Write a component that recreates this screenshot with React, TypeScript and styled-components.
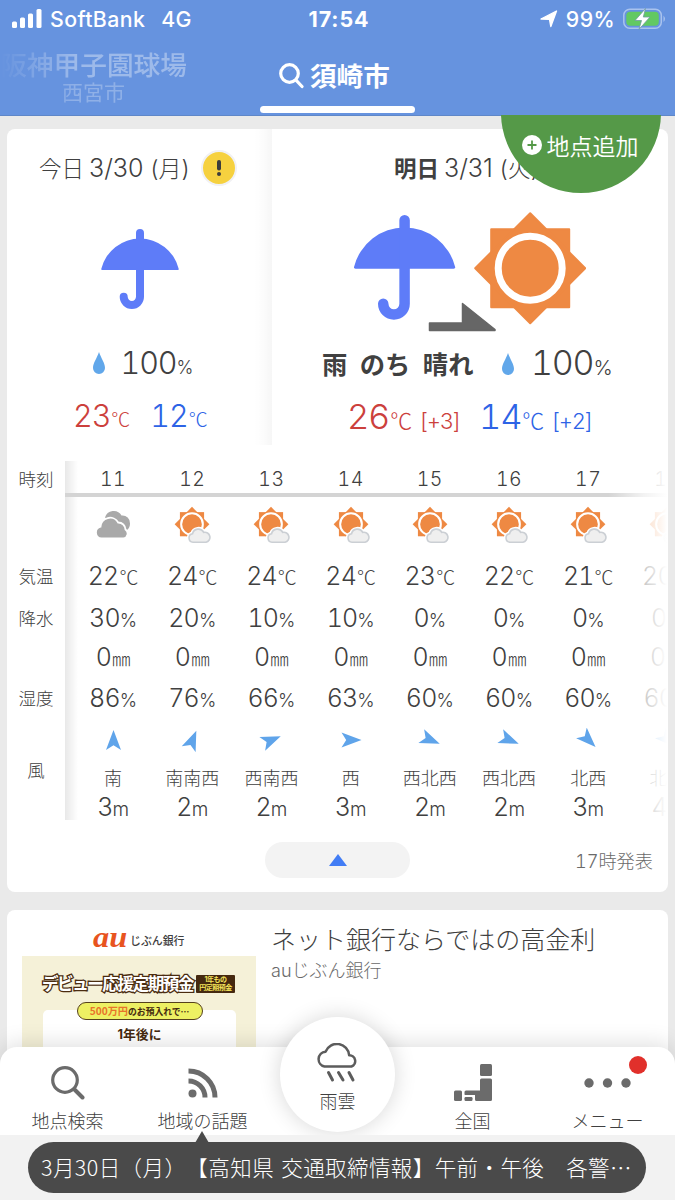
import React from 'react';
import styled, { createGlobalStyle, css } from 'styled-components';

const GlobalStyle = createGlobalStyle`
  * { box-sizing: border-box; }
  body {
    margin: 0;
    background: #eaeaea;
    color: #404040;
    font-family: Inter, "Noto Sans CJK JP", sans-serif;
    font-weight: 300;
    text-spacing-trim: space-all;
    white-space: nowrap;
  }
  svg { display: block; flex: none; }
`;

const Screen = styled.div`
  position: relative;
  width: 675px;
  height: 1200px;
  overflow: hidden;
  background: #eaeaea;
`;

/* ---------- header ---------- */

const Header = styled.header`
  height: 116px;
  background: #6693df;
  border-bottom: 1px solid #5f87c8;
  color: #fff;
`;

const StatusBar = styled.div`
  display: grid;
  grid-template-columns: 1fr auto 1fr;
  align-items: center;
  height: 37px;
  padding: 0 9px 0 12px;
  font-size: 21.3px;
  font-weight: 500;
  letter-spacing: 0.4px;
`;

const StatusGroup = styled.div<{ $end?: boolean }>`
  display: flex;
  align-items: center;
  gap: 8px;
  justify-content: ${(p) => (p.$end ? 'flex-end' : 'flex-start')};
`;

const Network = styled.span`
  margin-left: 8px;
`;

const Clock = styled.span`
  font-size: 21.5px;
  font-weight: 700;
  letter-spacing: 0.9px;
`;

const Tabs = styled.nav`
  display: grid;
  grid-template-columns: 260px 155px 260px;
  height: 78px;
`;

const SideTab = styled.div`
  display: flex;
  flex-direction: column;
  align-items: center;
  width: 187px;
  padding-top: 12px;
  color: rgba(255, 255, 255, 0.36);
  mask-image: linear-gradient(90deg, transparent 0, #000 75px);
`;

const SideTabName = styled.div`
  align-self: flex-end;
  font-size: 26.7px;
  line-height: 32px;
  font-weight: 500;
`;

const SideTabCity = styled.div`
  font-size: 21px;
  line-height: 24px;
  font-weight: 400;
  opacity: 0.75;
`;

const ActiveTab = styled.div`
  display: flex;
  flex-direction: column;
  justify-content: space-between;
  padding-bottom: 2px;
`;

const ActiveName = styled.div`
  display: flex;
  align-items: center;
  gap: 6px;
  height: 62px;
  padding: 15px 0 0 19px;
  font-size: 26.6px;
  line-height: 48px;
  font-weight: 700;
`;

const ActiveBar = styled.div`
  height: 7px;
  border-radius: 4px;
  background: #fff;
`;

const AddClip = styled.div`
  position: absolute;
  left: 501px;
  top: 115px;
  width: 160px;
  height: 78px;
  overflow: hidden;
`;

const AddPlace = styled.button`
  display: flex;
  align-items: center;
  justify-content: center;
  gap: 5px;
  width: 160px;
  height: 160px;
  margin-top: -82px;
  padding: 63px 2px 0 0;
  border: 0;
  border-radius: 50%;
  background: #559948;
  color: #fff;
  font-family: inherit;
  font-size: 23px;
  font-weight: 350;
`;

/* ---------- weather card ---------- */

const Main = styled.main`
  display: flex;
  flex-direction: column;
  gap: 18px;
  padding: 13px 7px 0;
`;

const Card = styled.section`
  width: 661px;
  border-radius: 8px;
  background: #fff;
`;

const Days = styled.div`
  display: grid;
  grid-template-columns: 265px 1fr;
  height: 316px;
`;

const Day = styled.div<{ $shade?: boolean }>`
  display: flex;
  flex-direction: column;
  ${(p) =>
    p.$shade &&
    css`
      border-radius: 8px 0 0 0;
      background: linear-gradient(90deg, rgba(0, 0, 0, 0) 247px, rgba(0, 0, 0, 0.01) 256px, rgba(0, 0, 0, 0.035) 265px);
    `}
`;

const DayTitle = styled.div<{ $left: number }>`
  display: flex;
  align-items: center;
  height: 77px;
  padding-left: ${(p) => p.$left}px;
  font-size: 25px;
`;

const DayWord = styled.span<{ $bold?: boolean }>`
  margin: -2px 5px 0 0;
  font-size: 22.5px;
  font-weight: ${(p) => (p.$bold ? 700 : 300)};
`;

const DayWeek = styled.span`
  margin: -2px 0 0 7px;
  font-size: 23px;
`;

const Alert = styled.span`
  display: grid;
  place-items: center;
  width: 36px;
  height: 36px;
  margin-left: 12px;
  border: 2px solid #f1f1f4;
  border-radius: 50%;
  background: #f6d13f;
`;

const DayIcons = styled.div<{ $left: number; $top: number }>`
  display: flex;
  align-items: flex-start;
  height: 128px;
  padding: ${(p) => p.$top}px 0 0 ${(p) => p.$left}px;
`;

const DayLine = styled.div<{ $left: number; $height: number }>`
  display: flex;
  align-items: center;
  height: ${(p) => p.$height}px;
  padding-left: ${(p) => p.$left}px;
`;

const Telop = styled.span`
  width: 180px;
  margin-top: -2px;
  font-size: 25.3px;
  font-weight: 700;
  word-spacing: 6.5px;
`;

const Figure = styled.span<{ $size: number; $tone?: string; $gap?: number }>`
  display: inline-flex;
  align-items: baseline;
  margin-left: ${(p) => p.$gap ?? 0}px;
  font-size: ${(p) => p.$size}px;
  line-height: 1.2;
  letter-spacing: -0.035em;
  font-feature-settings: 'tnum';
  color: ${(p) => p.$tone ?? 'inherit'};
`;

const Unit = styled.span<{ $size: number }>`
  font-size: ${(p) => p.$size}px;
  line-height: 1;
  letter-spacing: 0;
`;

const Celsius = styled(Unit)`
  margin-left: 1px;
  font-family: 'Noto Sans CJK JP', sans-serif;
`;

const Delta = styled.span`
  margin-left: 7px;
  font-size: 22px;
`;

/* ---------- hourly table ---------- */

const Hourly = styled.div`
  display: grid;
  grid-template-columns: 58px 1fr;
  height: 359px;
  margin-top: 16px;
`;

const rows = css`
  display: grid;
  grid-template-rows: 36px 56px 45px 39px 40px 42px 42px 32px 27px;
  justify-items: center;
  align-items: center;
`;

const Labels = styled.div`
  ${rows}
  font-size: 17.5px;
`;

const Label = styled.div<{ $row: string }>`
  grid-row: ${(p) => p.$row};
  margin-top: -1px;
`;

const Scroller = styled.div`
  position: relative;
  display: flex;
  padding-left: 8.5px;
  overflow: hidden;
  background: linear-gradient(90deg, rgba(0, 0, 0, 0.09), rgba(0, 0, 0, 0) 13px);

  &::after {
    content: '';
    position: absolute;
    inset: 0 0 0 auto;
    width: 68px;
    background: linear-gradient(90deg, rgba(255, 255, 255, 0) 8px, rgba(255, 255, 255, 0.72) 44px, #fff 67px);
  }
`;

const HourColumn = styled.div`
  ${rows}
  flex: none;
  width: 79.2px;
`;

const Hour = styled.div`
  align-self: stretch;
  justify-self: stretch;
  border-bottom: 4px solid #d4d4d4;
  font-size: 19.5px;
  line-height: 36px;
  text-align: center;
  letter-spacing: 0.5px;
  font-feature-settings: 'tnum';
`;

const FirstRule = styled.div`
  flex: none;
  width: 8.5px;
  height: 36px;
  margin-left: -8.5px;
  border-bottom: 4px solid #d4d4d4;
`;

const Direction = styled.div`
  font-size: 18px;
`;

const CardFoot = styled.div`
  display: grid;
  grid-template-columns: 1fr 145px 1fr;
  align-items: center;
  height: 72px;
  padding: 8px 15px 0 15px;
`;

const Collapse = styled.button`
  display: grid;
  place-items: center;
  height: 36px;
  padding: 0;
  border: 0;
  border-radius: 18px;
  background: #f3f3f3;
`;

const Issued = styled.div`
  text-align: right;
  font-size: 18.2px;
  font-feature-settings: 'tnum';
  color: #6a6a6a;
`;

/* ---------- sponsored card ---------- */

const AdCard = styled(Card)`
  display: grid;
  grid-template-columns: 249px 1fr;
  column-gap: 15px;
  height: 300px;
`;

const Banner = styled.div`
  width: 234px;
  margin-left: 15px;
`;

const BankLogo = styled.div`
  display: flex;
  align-items: center;
  gap: 3px;
  height: 46px;
  padding: 14px 0 0 71px;
  font-size: 10.9px;
  font-weight: 500;
`;

const AuMark = styled.span`
  width: 34px;
  font: italic 700 30px/20px 'Liberation Serif', serif;
  color: #e8541f;
  transform: translateY(-3px) scaleX(1.08);
  transform-origin: left;
`;

const BannerArt = styled.div`
  height: 254px;
  padding-top: 16px;
  background: #f5f1d8;
`;

const BannerHead = styled.div`
  display: flex;
  align-items: center;
  gap: 3px;
  padding-left: 20px;
`;

const BannerTitle = styled.span`
  width: 151px;
  font-size: 16.6px;
  line-height: 24px;
  font-weight: 700;
  letter-spacing: -1.5px;
  color: #fff;
  paint-order: stroke fill;
  -webkit-text-stroke: 2.6px #4a2c10;
`;

const BannerTag = styled.span`
  width: 39px;
  height: 18px;
  padding-top: 1px;
  border-radius: 1px;
  background: #45290f;
  color: #f3e35a;
  font-size: 7px;
  line-height: 8px;
  font-weight: 700;
  text-align: center;
  letter-spacing: -0.5px;
`;

const BannerPanel = styled.div`
  display: flex;
  flex-direction: column;
  align-items: center;
  width: 193px;
  height: 200px;
  margin: 14px 0 0 21px;
  border-radius: 5px;
  background: #fff;
`;

const BannerPill = styled.div`
  width: 126px;
  height: 18px;
  margin-top: -8px;
  border: 1px solid #55401c;
  border-radius: 9px;
  background: #edf063;
  color: #45290f;
  font-family: 'Noto Sans CJK JP', sans-serif;
  font-size: 8.8px;
  line-height: 16px;
  font-weight: 700;
  text-align: center;

  b {
    font-size: 10.2px;
    font-weight: 700;
    color: #e8742a;
  }
`;

const BannerTerm = styled.div`
  margin-top: 7px;
  color: #45290f;
  font-size: 12.8px;
  line-height: 16px;
  font-weight: 700;
`;

const BannerRate = styled.div`
  margin-top: 2px;
  color: #45290f;
  font-size: 32px;
  line-height: 32px;
  font-weight: 800;
`;

const AdText = styled.div`
  padding-top: 14px;
`;

const AdTitle = styled.div`
  font-size: 25px;
  line-height: 32px;
`;

const AdSponsor = styled.div`
  padding-top: 2px;
  font-size: 18px;
  line-height: 26px;
  color: #6a6a6a;
`;

/* ---------- bottom navigation ---------- */

const Dock = styled.footer`
  position: absolute;
  left: 0;
  right: 0;
  bottom: 0;
  height: 153px;
`;

const NavBar = styled.nav`
  position: relative;
  display: grid;
  grid-template-columns: repeat(5, 135px);
  height: 88px;
  border-radius: 17px 17px 0 0;
  background: #fff;
  box-shadow: 0 -3px 22px rgba(0, 0, 0, 0.13);
`;

const NavItem = styled.div`
  display: flex;
  flex-direction: column;
  align-items: center;
  font-size: 18px;
  line-height: 26px;
`;

const NavIcon = styled.div`
  position: relative;
  display: grid;
  place-items: center;
  width: 70px;
  height: 62px;
  padding-top: 9px;
`;

const Unread = styled.span`
  position: absolute;
  left: 56px;
  top: 9px;
  width: 18px;
  height: 18px;
  border-radius: 50%;
  background: #e1302b;
`;

const RainButton = styled.div`
  display: flex;
  flex-direction: column;
  align-items: center;
  gap: 6px;
  width: 115px;
  height: 115px;
  margin-top: -30px;
  padding-top: 26px;
  border-radius: 50%;
  background: #fff;
  box-shadow: 0 0 22px rgba(0, 0, 0, 0.16);
`;

const TickerArea = styled.div`
  position: relative;
  height: 65px;
  padding: 7px 29px 0 28px;
  background: #f2f2f2;
`;

const Ticker = styled.div`
  position: relative;
  height: 51px;
  padding-left: 13px;
  border-radius: 26px;
  background: #4a4a4a;
  color: #fff;
  font-family: 'Noto Sans CJK JP', sans-serif;
  font-size: 21.5px;
  line-height: 49px;
  letter-spacing: 0.42px;
  word-spacing: 2px;

  &::before {
    content: '';
    position: absolute;
    left: 167px;
    top: -11px;
    border: solid transparent;
    border-width: 0 7.5px 12px;
    border-bottom-color: #4a4a4a;
  }
`;

/* ---------- drawings ---------- */

const UmbrellaShape = () => (
  <>
    <path d="M1.5 41Q0 41 .4 39.6A39.8 39.8 0 0 1 77.6 39.6Q78 41 76.5 41Z" fill="#5e7cf8" />
    <path d="M39 4V67.8a8.15 8.15 0 0 1-16.3 0" fill="none" stroke="#5e7cf8" strokeWidth="8" strokeLinecap="round" />
  </>
);

const Umbrella = () => (
  <svg width="78" height="80" viewBox="0 0 78 80">
    <UmbrellaShape />
  </svg>
);

const TomorrowIcon = () => (
  <svg width="233" height="120" viewBox="353 212 233 120">
    <g transform="translate(353.5 215) scale(1.31)">
      <UmbrellaShape />
    </g>
    <g transform="translate(530.2 268.2)">
      <g fill="#ee8943" stroke="#ee8943" strokeWidth="2" strokeLinejoin="round">
        <path d="M-39-39H39V39H-39Z" />
        <path d="M0-55L55 0L0 55L-55 0Z" />
      </g>
      <circle r="32" fill="none" stroke="#fff" strokeWidth="7" />
    </g>
    <path d="M429.5 323H462.5V303.5L495 329.5V330.5H429.5Z" fill="#666" stroke="#666" strokeWidth="1.5" strokeLinejoin="round" />
  </svg>
);

const smallCloud =
  'M5.5 15.5a4.3 4.3 0 0 1-.5-8.5A6 6 0 0 1 16.2 5.6A5 5 0 0 1 18.5 15.5Z';

const SunCloud = () => (
  <svg width="38" height="38" viewBox="0 0 38 38">
    <g transform="translate(19 18.2) scale(.31)">
      <g fill="#ee8943">
        <path d="M-39-39H39V39H-39Z" />
        <path d="M0-56L56 0L0 56L-56 0Z" />
      </g>
      <circle r="35" fill="none" stroke="#fff" strokeWidth="6.5" />
    </g>
    <g transform="translate(14.5 20.8)">
      <path d={smallCloud} fill="#fff" stroke="#fff" strokeWidth="4.5" />
      <path d={smallCloud} fill="#efefef" stroke="#cbcfd4" strokeWidth="1.6" />
    </g>
  </svg>
);

const Clouds = () => (
  <svg width="36" height="30" viewBox="0 0 36 30">
    <path d="M10 7.5A9 9 0 0 1 26.5 5.5A7.5 7.5 0 0 1 35 13.5Q35 17.5 32 20L20 14Z" fill="#a9a9a9" />
    <path
      d="M6.5 28.5a6 6 0 0 1-1-11.8A9.5 9.5 0 0 1 23.2 12.5A7.2 7.2 0 0 1 30.5 19.5A5 5 0 0 1 28.5 28.5Z"
      fill="#a9a9a9"
      stroke="#fff"
      strokeWidth="1.8"
    />
  </svg>
);

const Drop = () => (
  <svg width="12" height="22" viewBox="0 0 12 22">
    <path d="M6 0C8 6 12 11 12 16A6 6 0 0 1 0 16C0 11 4 6 6 0Z" fill="#61a7ea" />
  </svg>
);

const WindArrow = ({ turn }: { turn: number }) => (
  <svg width="24" height="24" viewBox="-12.5 -12 24 24">
    <path d="M0-10L7.5 10L0 5.3L-7.5 10Z" fill="#5fa4ea" transform={`rotate(${turn})`} />
  </svg>
);

const Magnifier = () => (
  <svg width="25" height="26" viewBox="0 0 25 26" fill="none" stroke="#fff" strokeWidth="3.2" strokeLinecap="round">
    <circle cx="10.5" cy="10.5" r="8.8" />
    <path d="M17 17.2L23 23.5" />
  </svg>
);

const Signal = () => (
  <svg width="30" height="20" viewBox="0 0 30 20" fill="#fff">
    <rect x="0" y="12.5" width="5" height="6.5" rx="1.5" />
    <rect x="8" y="8.5" width="5" height="10.5" rx="1.5" />
    <rect x="16" y="4.5" width="5" height="14.5" rx="1.5" />
    <rect x="24.5" y="0" width="5" height="19" rx="1.5" />
  </svg>
);

const LocationArrow = () => (
  <svg width="18" height="18" viewBox="0 0 18 18" fill="#fff" stroke="#fff" strokeWidth="1.4" strokeLinejoin="round">
    <path d="M1 9L16.5 1L10.8 16.5L9.5 9.2Z" />
  </svg>
);

const Battery = () => (
  <svg width="43" height="24" viewBox="0 0 43 24">
    <rect x=".8" y="2.3" width="37.5" height="19" rx="6" fill="none" stroke="#a9c3ee" strokeWidth="1.5" />
    <path d="M40.5 8.5q3 3.3 0 6.6z" fill="#a9c3ee" />
    <rect x="3.3" y="4.8" width="32.5" height="14" rx="4" fill="#62c962" />
    <path d="M22.5 1.5L12 13.5H18.5L16 22.3L27 10H20.3Z" fill="#fff" stroke="#6f9c9f" strokeWidth=".8" />
  </svg>
);

const PlusBadge = () => (
  <svg width="20" height="20" viewBox="0 0 20 20">
    <circle cx="10" cy="10" r="10" fill="#fff" />
    <path d="M10 5.5V14.5M5.5 10H14.5" stroke="#559948" strokeWidth="1.8" />
  </svg>
);

const Exclamation = () => (
  <svg width="6" height="18" viewBox="0 0 6 18" fill="#3c3c3c">
    <rect x="1" y="1" width="4" height="10.5" rx="2" />
    <circle cx="3" cy="15" r="2" />
  </svg>
);

const SearchIcon = () => (
  <svg width="34" height="34" viewBox="0 0 34 34" fill="none" stroke="#6b6b6b" strokeLinecap="round">
    <circle cx="14" cy="14" r="12.3" strokeWidth="3.2" />
    <path d="M24 24L31.5 31.5" strokeWidth="4" />
  </svg>
);

const FeedIcon = () => (
  <svg width="30" height="30" viewBox="0 0 30 30" fill="none" stroke="#6b6b6b" strokeWidth="5">
    <circle cx="4.5" cy="25.5" r="4" fill="#6b6b6b" stroke="none" />
    <path d="M.5 13A16.5 16.5 0 0 1 17 29.5" />
    <path d="M.5 3A26.5 26.5 0 0 1 27 29.5" />
  </svg>
);

const JapanIcon = () => (
  <svg width="38" height="38" viewBox="0 0 38 38" fill="#6b6b6b">
    <rect x="26" y="0" width="12" height="12" rx="1.5" />
    <path d="M27.5 14.5H36.5Q38 14.5 38 16V35.5Q38 37 36.5 37H22.5Q21 37 21 35.5V31H11Q10.5 31 10.5 30V28Q10.5 26.5 12 26.5H26V16Q26 14.5 27.5 14.5Z" />
    <rect x="0" y="26.5" width="8" height="10.5" rx="1.5" />
    <rect x="10.5" y="33" width="8" height="4" rx="1.2" />
  </svg>
);

const DotsIcon = () => (
  <svg width="48" height="10" viewBox="0 0 48 10" fill="#6b6b6b">
    <circle cx="5" cy="5" r="4.7" />
    <circle cx="23.5" cy="5" r="4.7" />
    <circle cx="42" cy="5" r="4.7" />
  </svg>
);

const RainIcon = () => (
  <svg width="43" height="40" viewBox="0 0 43 40" fill="none" stroke="#5c5c5c" strokeWidth="2.5" strokeLinecap="round">
    <path d="M8.5 23.5A7.5 7.5 0 0 1 9.5 8.7A12.3 12.3 0 0 1 33.2 12.3A5.8 5.8 0 0 1 35.5 23.5Z" strokeLinejoin="round" />
    <g strokeWidth="3">
      <path d="M12.5 29.5L16.5 37M22.5 29.5L27 37M33 29.5L37 37" />
    </g>
  </svg>
);

/* ---------- data ---------- */

type HourData = {
  hour: string;
  sun: boolean;
  temp: number;
  chance: number;
  humidity: number;
  turn: number;
  wind: string;
  speed: number;
};

const hours: HourData[] = [
  { hour: '11', sun: false, temp: 22, chance: 30, humidity: 86, turn: 0, wind: '南', speed: 3 },
  { hour: '12', sun: true, temp: 24, chance: 20, humidity: 76, turn: 22.5, wind: '南南西', speed: 2 },
  { hour: '13', sun: true, temp: 24, chance: 10, humidity: 66, turn: 67.5, wind: '西南西', speed: 2 },
  { hour: '14', sun: true, temp: 24, chance: 10, humidity: 63, turn: 90, wind: '西', speed: 3 },
  { hour: '15', sun: true, temp: 23, chance: 0, humidity: 60, turn: 112.5, wind: '西北西', speed: 2 },
  { hour: '16', sun: true, temp: 22, chance: 0, humidity: 60, turn: 112.5, wind: '西北西', speed: 2 },
  { hour: '17', sun: true, temp: 21, chance: 0, humidity: 60, turn: 135, wind: '北西', speed: 3 },
  { hour: '18', sun: true, temp: 20, chance: 0, humidity: 60, turn: 135, wind: '北西', speed: 4 },
];

const RED = '#cc403c';
const BLUE = '#2d63e6';

export default function App() {
  return (
    <Screen>
      <GlobalStyle />
      <Header>
        <StatusBar>
          <StatusGroup>
            <Signal />
            <span>SoftBank</span>
            <Network>4G</Network>
          </StatusGroup>
          <Clock>17:54</Clock>
          <StatusGroup $end>
            <LocationArrow />
            <span>99%</span>
            <Battery />
          </StatusGroup>
        </StatusBar>
        <Tabs>
          <SideTab>
            <SideTabName>阪神甲子園球場</SideTabName>
            <SideTabCity>西宮市</SideTabCity>
          </SideTab>
          <ActiveTab>
            <ActiveName>
              <Magnifier />
              須崎市
            </ActiveName>
            <ActiveBar />
          </ActiveTab>
        </Tabs>
      </Header>

      <Main>
        <Card>
          <Days>
            <Day $shade>
              <DayTitle $left={32}>
                <DayWord>今日</DayWord>3/30<DayWeek>(月)</DayWeek>
                <Alert>
                  <Exclamation />
                </Alert>
              </DayTitle>
              <DayIcons $left={94} $top={23}>
                <Umbrella />
              </DayIcons>
              <DayLine $left={85.5} $height={58}>
                <Drop />
                <Figure $size={30.5} $gap={16}>
                  100<Unit $size={18}>%</Unit>
                </Figure>
              </DayLine>
              <DayLine $left={66} $height={48}>
                <Figure $size={30.5} $tone={RED}>
                  23<Celsius $size={19}>℃</Celsius>
                </Figure>
                <Figure $size={30.5} $tone={BLUE} $gap={20}>
                  12<Celsius $size={19}>℃</Celsius>
                </Figure>
              </DayLine>
            </Day>
            <Day>
              <DayTitle $left={122}>
                <DayWord $bold>明日</DayWord>3/31<DayWeek>(火)</DayWeek>
              </DayTitle>
              <DayIcons $left={81} $top={6}>
                <TomorrowIcon />
              </DayIcons>
              <DayLine $left={50} $height={59}>
                <Telop>雨 のち 晴れ</Telop>
                <Drop />
                <Figure $size={34} $gap={17}>
                  100<Unit $size={20.5}>%</Unit>
                </Figure>
              </DayLine>
              <DayLine $left={75} $height={47}>
                <Figure $size={34.5} $tone={RED}>
                  26<Celsius $size={22}>℃</Celsius>
                  <Delta>[+3]</Delta>
                </Figure>
                <Figure $size={34.5} $tone={BLUE} $gap={19}>
                  14<Celsius $size={22}>℃</Celsius>
                  <Delta>[+2]</Delta>
                </Figure>
              </DayLine>
            </Day>
          </Days>

          <Hourly>
            <Labels>
              <Label $row="1">時刻</Label>
              <Label $row="3">気温</Label>
              <Label $row="4">降水</Label>
              <Label $row="6">湿度</Label>
              <Label $row="7 / span 3">風</Label>
            </Labels>
            <Scroller>
              <FirstRule />
              {hours.map((h) => (
                <HourColumn key={h.hour}>
                  <Hour>{h.hour}</Hour>
                  {h.sun ? <SunCloud /> : <Clouds />}
                  <Figure $size={25}>
                    {h.temp}
                    <Celsius $size={19}>℃</Celsius>
                  </Figure>
                  <Figure $size={25}>
                    {h.chance}
                    <Unit $size={18.5}>%</Unit>
                  </Figure>
                  <Figure $size={25}>
                    0<Celsius $size={18.5}>㎜</Celsius>
                  </Figure>
                  <Figure $size={25}>
                    {h.humidity}
                    <Unit $size={18.5}>%</Unit>
                  </Figure>
                  <WindArrow turn={h.turn} />
                  <Direction>{h.wind}</Direction>
                  <Figure $size={25}>
                    {h.speed}
                    <Unit $size={19}>m</Unit>
                  </Figure>
                </HourColumn>
              ))}
            </Scroller>
          </Hourly>

          <CardFoot>
            <span />
            <Collapse>
              <svg width="18" height="12" viewBox="0 0 18 12">
                <path d="M9 0L18 12H0Z" fill="#427df5" />
              </svg>
            </Collapse>
            <Issued>17時発表</Issued>
          </CardFoot>
        </Card>

        <AdCard>
          <Banner>
            <BankLogo>
              <AuMark>au</AuMark>じぶん銀行
            </BankLogo>
            <BannerArt>
              <BannerHead>
                <BannerTitle>デビュー応援定期預金</BannerTitle>
                <BannerTag>
                  1年もの
                  <br />
                  円定期預金
                </BannerTag>
              </BannerHead>
              <BannerPanel>
                <BannerPill>
                  <b>500万円</b>のお預入れで…
                </BannerPill>
                <BannerTerm>1年後に</BannerTerm>
                <BannerRate>15,000</BannerRate>
              </BannerPanel>
            </BannerArt>
          </Banner>
          <AdText>
            <AdTitle>ネット銀行ならではの高金利</AdTitle>
            <AdSponsor>auじぶん銀行</AdSponsor>
          </AdText>
        </AdCard>
      </Main>

      <AddClip>
        <AddPlace>
          <PlusBadge />
          地点追加
        </AddPlace>
      </AddClip>

      <Dock>
        <NavBar>
          <NavItem>
            <NavIcon>
              <SearchIcon />
            </NavIcon>
            地点検索
          </NavItem>
          <NavItem>
            <NavIcon>
              <FeedIcon />
            </NavIcon>
            地域の話題
          </NavItem>
          <NavItem>
            <RainButton>
              <RainIcon />
              雨雲
            </RainButton>
          </NavItem>
          <NavItem>
            <NavIcon>
              <JapanIcon />
            </NavIcon>
            全国
          </NavItem>
          <NavItem>
            <NavIcon>
              <DotsIcon />
              <Unread />
            </NavIcon>
            メニュー
          </NavItem>
        </NavBar>
        <TickerArea>
          <Ticker>3月30日（月）【高知県 交通取締情報】午前・午後　各警…</Ticker>
        </TickerArea>
      </Dock>
    </Screen>
  );
}
